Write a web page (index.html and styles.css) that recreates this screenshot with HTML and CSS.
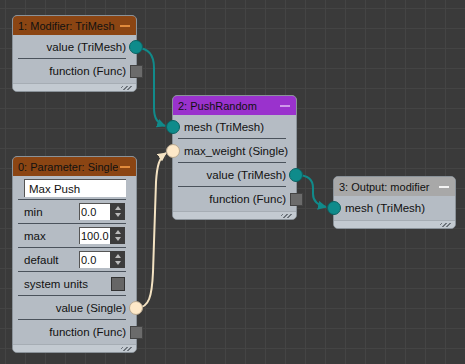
FILE: index.html
```html
<!DOCTYPE html>
<html lang="en">
<head>
    <meta charset="UTF-8">
    <meta name="viewport" content="width=device-width, initial-scale=1.0">
    <title>Node Graph</title>
    <link rel="stylesheet" href="styles.css">
</head>
<body>
    <div class="canvas">
        <!-- connections between sockets -->
        <svg class="wires" width="465" height="364" viewBox="0 0 465 364">
            <defs>
                <marker id="arrow-teal" viewBox="0 0 10 10" refX="9" refY="5" markerWidth="4.5" markerHeight="4.5" orient="auto">
                    <path d="M0 0 L10 5 L0 10 Z" fill="#118a8a"></path>
                </marker>
                <marker id="arrow-cream" viewBox="0 0 10 10" refX="9" refY="5" markerWidth="4.5" markerHeight="4.5" orient="auto">
                    <path d="M0 0 L10 5 L0 10 Z" fill="#f3e2c2"></path>
                </marker>
            </defs>
            <path class="wire wire-mesh" d="M137 48 C149 48 154 55 154 68 L154 108 C154 118 157 123 165 126" marker-end="url(#arrow-teal)"></path>
            <path class="wire wire-single" d="M137 308 C149 308 152 296 153 272 L156 182 C157 166 159 158 166 153" marker-end="url(#arrow-cream)"></path>
            <path class="wire wire-mesh" d="M297 175 C309 175 313 180 313 188 L313 194 C313 201 317 205 326 207" marker-end="url(#arrow-teal)"></path>
        </svg>

        <!-- 1: Modifier -->
        <div class="node node-modifier">
            <div class="node-header header-brown">
                <span class="node-title">1: Modifier: TriMesh</span>
                <span class="collapse"></span>
            </div>
            <div class="row row-out">
                <span>value (TriMesh)</span>
                <span class="socket socket-out dot-teal"></span>
            </div>
            <div class="row row-out last">
                <span>function (Func)</span>
                <span class="socket socket-out square"></span>
            </div>
            <div class="node-footer"><span class="grip"></span></div>
        </div>

        <!-- 0: Parameter -->
        <div class="node node-param">
            <div class="node-header header-brown">
                <span class="node-title">0: Parameter: Single</span>
                <span class="collapse"></span>
            </div>
            <div class="row row-in">
                <div class="textbox">Max Push</div>
            </div>
            <div class="row row-in">
                <span class="grow">min</span>
                <div class="spinner"><span class="spin-value">0.0</span><span class="spin-btns"><i class="up"></i><i class="down"></i></span></div>
            </div>
            <div class="row row-in">
                <span class="grow">max</span>
                <div class="spinner"><span class="spin-value">100.0</span><span class="spin-btns"><i class="up"></i><i class="down"></i></span></div>
            </div>
            <div class="row row-in">
                <span class="grow">default</span>
                <div class="spinner"><span class="spin-value">0.0</span><span class="spin-btns"><i class="up"></i><i class="down"></i></span></div>
            </div>
            <div class="row row-in">
                <span class="grow">system units</span>
                <span class="checkbox"></span>
            </div>
            <div class="row row-out">
                <span>value (Single)</span>
                <span class="socket socket-out dot-cream"></span>
            </div>
            <div class="row row-out last">
                <span>function (Func)</span>
                <span class="socket socket-out square"></span>
            </div>
            <div class="node-footer"><span class="grip"></span></div>
        </div>

        <!-- 2: PushRandom -->
        <div class="node node-push">
            <div class="node-header header-purple">
                <span class="node-title">2: PushRandom</span>
                <span class="collapse"></span>
            </div>
            <div class="row row-in">
                <span class="socket socket-in dot-teal"></span>
                <span>mesh (TriMesh)</span>
            </div>
            <div class="row row-in">
                <span class="socket socket-in dot-cream"></span>
                <span>max_weight (Single)</span>
            </div>
            <div class="row row-out">
                <span>value (TriMesh)</span>
                <span class="socket socket-out dot-teal"></span>
            </div>
            <div class="row row-out last">
                <span>function (Func)</span>
                <span class="socket socket-out square"></span>
            </div>
            <div class="node-footer"><span class="grip"></span></div>
        </div>

        <!-- 3: Output -->
        <div class="node node-output">
            <div class="node-header header-gray">
                <span class="node-title">3: Output: modifier</span>
                <span class="collapse"></span>
            </div>
            <div class="row row-in last">
                <span class="socket socket-in dot-teal"></span>
                <span>mesh (TriMesh)</span>
            </div>
            <div class="node-footer"><span class="grip"></span></div>
        </div>
    </div>
</body>
</html>
```

FILE: styles.css
```css
body {
    margin: 0;
    background-color: #3a3a3a;
    font-family: 'Liberation Sans', Arial, sans-serif;
    font-size: 11.5px;
    color: #111;
}
.canvas {
    position: relative;
    width: 465px;
    height: 364px;
    overflow: hidden;
    background-color: #3a3a3a;
    background-image:
        linear-gradient(to right, #444 1px, transparent 1px),
        linear-gradient(to bottom, #444 1px, transparent 1px);
    background-size: 20px 20px;
    background-position: 5px 8px;
}
.wires {
    position: absolute;
    left: 0;
    top: 0;
}
.wire {
    fill: none;
    stroke-width: 2;
}
.wire-mesh {
    stroke: #118a8a;
}
.wire-single {
    stroke: #f3e2c2;
}

/* nodes */
.node {
    position: absolute;
    width: 125px;
    box-sizing: border-box;
    display: flex;
    flex-direction: column;
    background: #b5bcc4;
    border: 1px solid #8a9299;
    border-radius: 5px;
}
.node-modifier { left: 12px; top: 15px; }
.node-param { left: 12px; top: 156px; }
.node-push { left: 172px; top: 95px; }
.node-output { left: 333px; top: 176px; width: 123px; }

.node-header {
    height: 19px;
    display: flex;
    align-items: center;
    justify-content: space-between;
    padding: 0 5px 0 5px;
    border-radius: 4px 4px 0 0;
}
.node-title {
    white-space: nowrap;
    overflow: hidden;
    font-size: 11px;
}
.header-brown { background: #8b4513; }
.header-purple { background: #9a32cd; }
.header-gray { background: #a8a8a8; }
.collapse {
    flex-shrink: 0;
    width: 10px;
    height: 2px;
    margin-right: 1px;
}
.header-brown .collapse { background: #e08a3c; }
.header-purple .collapse { background: #cf99ea; }
.header-gray .collapse { background: #f4f4f4; }

.row {
    position: relative;
    height: 24px;
    box-sizing: border-box;
    margin: 0 10px 0 5px;
    display: flex;
    align-items: center;
    border-bottom: 1px solid #4a525b;
    white-space: nowrap;
}
.row.last {
    border-bottom: none;
}
.row-out {
    justify-content: flex-end;
}
.row-in {
    padding-left: 6px;
}
.grow {
    flex: 1;
}

/* sockets */
.socket {
    position: absolute;
    box-sizing: border-box;
}
.socket-out.dot-teal, .socket-out.dot-cream {
    right: -17px;
    top: 5px;
    width: 14px;
    height: 14px;
    border-radius: 50%;
}
.socket-in {
    left: -12px;
    top: 5px;
    width: 14px;
    height: 14px;
    border-radius: 50%;
}
.dot-teal {
    background: #0f8b8b;
    border: 1px solid #0a6262;
}
.dot-cream {
    background: #fde8c8;
    border: 1px solid #b8a890;
}
.square {
    right: -17px;
    top: 6px;
    width: 13px;
    height: 13px;
    background: #6b6b6b;
    border: 1px solid #444;
}

/* widgets */
.textbox {
    width: 103px;
    height: 18px;
    box-sizing: border-box;
    padding: 1px 4px 0;
    background: #fff;
    border-top: 1px solid #555;
    border-left: 1px solid #555;
    display: flex;
    align-items: center;
}
.spinner {
    display: flex;
    height: 17px;
    margin-right: 1px;
}
.spin-value {
    width: 31px;
    box-sizing: border-box;
    padding-left: 1px;
    background: #fff;
    border-top: 1px solid #555;
    border-left: 1px solid #555;
    display: flex;
    align-items: center;
    overflow: hidden;
    font-size: 11px;
}
.spin-btns {
    width: 15px;
    background: #3c3c3c;
    display: flex;
    flex-direction: column;
    align-items: center;
    justify-content: center;
    gap: 3px;
}
.spin-btns i {
    width: 0;
    height: 0;
    border-left: 3px solid transparent;
    border-right: 3px solid transparent;
}
.spin-btns .up { border-bottom: 4px solid #bbb; }
.spin-btns .down { border-top: 4px solid #bbb; }
.checkbox {
    width: 12px;
    height: 12px;
    margin-right: 1px;
    background: #666;
    border: 1px solid #333;
}

.node-footer {
    height: 7px;
    position: relative;
    background: #c3cad1;
    border-top: 1px solid #a6adb4;
    border-radius: 0 0 4px 4px;
}
.grip {
    position: absolute;
    right: 4px;
    bottom: 1px;
    width: 11px;
    height: 4px;
    background: repeating-linear-gradient(135deg, transparent 0 1px, #6d747b 1px 2px, transparent 2px 3px);
}
```
